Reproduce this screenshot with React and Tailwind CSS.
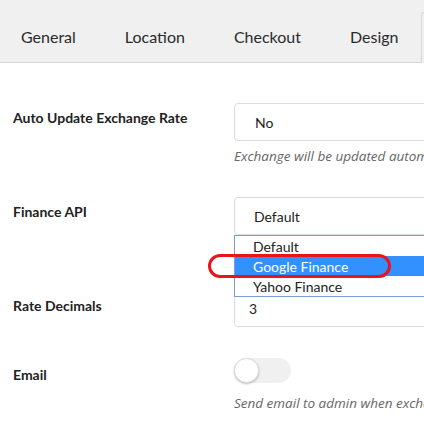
import React from "react";

const TABS = ["General", "Location", "Checkout", "Design"];
const API_OPTIONS = ["Default", "Google Finance", "Yahoo Finance"];

const label = "w-[221px] shrink-0 whitespace-nowrap text-[14px] leading-5 font-bold text-[#222]";
const help = "text-[13.5px] leading-5 italic text-[#666] whitespace-nowrap";
const box = "h-[38px] border border-[#dcdcdc] rounded-[4px] flex items-center text-[14px] text-[#222]";

export default function App() {
  return (
    <div className="relative w-[424px] h-[426px] overflow-hidden bg-white text-[#333]" style={{ fontFamily: "Lato, 'Open Sans', sans-serif" }}>
      {/* tab bar */}
      <div className="h-[63px] bg-[#f0f0f0] border-b border-[#d6d6d6] flex items-end">
        <div className="flex h-[50px] items-center gap-[49px] pl-[21px] shrink-0">
          {TABS.map((t) => (
            <div key={t} className="text-[16px] leading-none text-[#2b2b2b]">{t}</div>
          ))}
        </div>
        <div className="ml-auto w-[3px] h-[51px] border-l border-t border-[#d6d6d6] rounded-tl-[4px] bg-[#f0f0f0] -mb-px" />
      </div>

      <div className="pl-[13px]">
        {/* Auto update */}
        <div className="flex mt-[40px]">
          <div className={label + " pt-[5px]"}>Auto Update Exchange Rate</div>
          <div className="w-[260px] shrink-0">
            <div className={box + " pl-[20px]"}>No</div>
            <div className={help + " mt-[5px]"} style={{ fontFamily: "'Open Sans', sans-serif" }}>Exchange will be updated automatically</div>
          </div>
        </div>

        {/* Finance API */}
        <div className="flex mt-[31px] relative z-10">
          <div className={label + " pt-[5px]"}>Finance API</div>
          <div className="w-[260px] shrink-0 relative">
            <div className={box + " pl-[19px]"}>Default</div>
            <div className="absolute left-0 top-[38px] w-full border border-[#7a9cd3] bg-white">
              {API_OPTIONS.map((o) => (
                <div
                  key={o}
                  className={
                    o === "Google Finance"
                      ? "h-[20px] pl-[18px] flex items-center text-[14px] bg-[#3391ff] text-white"
                      : "h-[20px] pl-[18px] flex items-center text-[14px] text-[#222]"
                  }
                >
                  {o}
                </div>
              ))}
            </div>
          </div>
        </div>

        {/* Rate decimals */}
        <div className="flex mt-[54px]">
          <div className={label + " pt-[7px]"}>Rate Decimals</div>
          <div className="w-[260px] shrink-0">
            <div className={box + " pl-[14px]"}>3</div>
          </div>
        </div>

        {/* Email */}
        <div className="flex mt-[31px]">
          <div className={label + " pt-[7px]"}>Email</div>
          <div className="w-[260px] shrink-0">
            <div className="w-[57px] h-[25px] rounded-full bg-[#f0f0f0] relative">
              <div className="absolute left-0 top-0 w-[25px] h-[25px] rounded-full bg-white border border-[#dcdcdc] shadow-[0_1px_2px_rgba(0,0,0,0.25)]" />
            </div>
            <div className={help + " mt-[10px]"} style={{ fontFamily: "'Open Sans', sans-serif" }}>Send email to admin when exchange rate updated</div>
          </div>
        </div>
      </div>

      {/* red highlight annotation */}
      <div className="absolute left-[208px] top-[254px] w-[183px] h-[24px] border-[3px] border-[#e8161b] rounded-full z-20 pointer-events-none" />
    </div>
  );
}
